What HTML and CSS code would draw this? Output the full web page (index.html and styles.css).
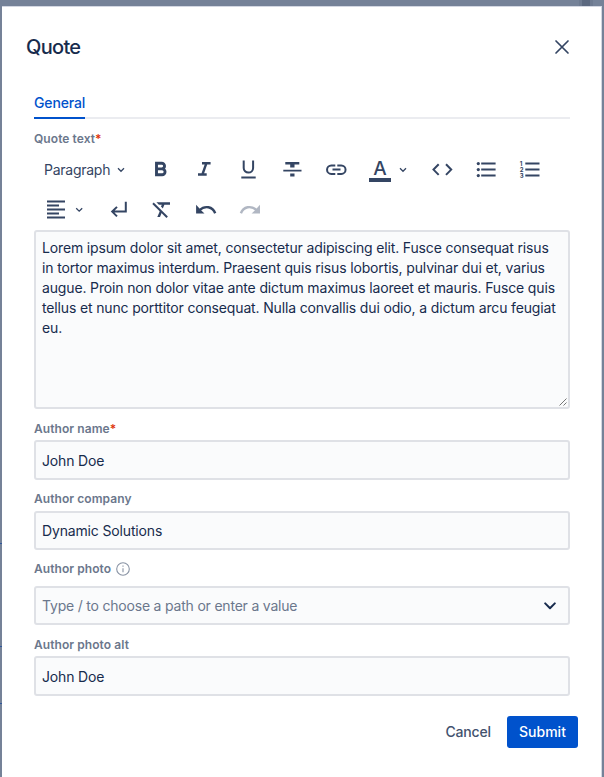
FILE: index.html
```html
<!DOCTYPE html>
<html lang="en">
<head>
<meta charset="utf-8">
<title>Quote</title>
<link rel="stylesheet" href="styles.css">
</head>
<body>
<main class="dialog">
  <header class="header">
    <h1>Quote</h1>
    <svg class="close" viewBox="0 0 16 16"><path d="M2 2l12 12M14 2L2 14"/></svg>
  </header>
  <nav class="tabs"><span class="tab">General</span></nav>
  <form class="form">
    <div class="label">Quote text<span class="req">*</span></div>
    <div class="toolbar">
      <div class="row">
        <div class="format"><span>Paragraph</span><svg class="chev" viewBox="0 0 8 6"><path d="M1 1.3l3 3 3-3"/></svg></div>
        <svg class="tool" viewBox="138 150 44 40"><path class="bold" d="M156.5 163.2h5.2a2.8 2.8 0 0 1 0 5.7h-5.2h5.6a2.9 2.9 0 0 1 0 5.9h-5.6z"/></svg>
        <svg class="tool" viewBox="182 150 44 40"><path class="s25" d="M202 163.2h8.6M198 174.5h8.7M206.4 163.2l-4 11.3"/></svg>
        <svg class="tool" viewBox="226 150 44 40"><path class="s2" d="M243.7 160.6v7.3a4.7 4.7 0 0 0 9.4 0v-7.3M241.3 177.6h14.4"/></svg>
        <svg class="tool" viewBox="270 150 44 40"><path class="solid" d="M285.3 162h14v2.6h-4.8v3h-4.3v-3h-4.9zM283.3 169.8h18.2v1.7h-18.2zM290.2 173.4h4.3v3h-4.3z"/></svg>
        <svg class="tool" viewBox="314 150 44 40"><path class="s2" d="M335.3 165.4h-4a4.2 4.2 0 0 0 0 8.5h4M337.3 165.4h4a4.2 4.2 0 0 1 0 8.5h-4M332.5 169.6h8"/></svg>
        <div class="color"><span class="letter">A</span><svg class="chev" viewBox="0 0 8 6"><path d="M1 1.3l3 3 3-3"/></svg></div>
        <svg class="tool" viewBox="420 150 44 40"><path class="s2" d="M438.7 164.3l-5.2 5.3 5.2 5.3M446 164.3l5.2 5.3-5.2 5.3"/></svg>
        <svg class="tool" viewBox="464 150 44 40"><path class="s2" d="M481.2 163.6h14.4M481.2 169.6h14.4M481.2 175.6h14.4"/><g class="solid"><circle cx="478.3" cy="163.6" r="1.6"/><circle cx="478.3" cy="169.6" r="1.6"/><circle cx="478.3" cy="175.6" r="1.6"/></g></svg>
        <svg class="tool" viewBox="508 150 44 40"><path class="s2" d="M525.3 163.6h14.2M525.3 169.6h14.2M525.3 175.6h14.2"/><g class="num"><text x="519.7" y="165.6">1</text><text x="519.7" y="171.7">2</text><text x="519.7" y="177.8">3</text></g></svg>
      </div>
      <div class="row">
        <svg class="wide" viewBox="34 190 62 40"><path class="s2" d="M47 201.5h18M47 205.6h12M47 209.6h18M47 213.6h12M47 217.6h18"/><path class="s13" d="M76.2 208.2l3 3 3-3"/></svg>
        <svg class="tool" viewBox="96 190 44 40"><path class="s2" d="M125.8 201.8v9.8h-13M117 206.9l-4.8 4.7 4.8 4.8"/></svg>
        <svg class="tool" viewBox="140 190 44 40"><path class="solid" d="M156.4 202.3H170v2.4h-5.6l-1.6 3.8-1.8-1.9.8-1.9h-2.9zM160.2 210.3l1.8 1.8-2 4.9h-2.7z"/><path class="s2" d="M153 203.2l14.2 14.1"/></svg>
        <svg class="tool" viewBox="184 190 44 40"><path class="solid" d="M196.1 204.8v8.7h8.4l-3.2-3.1z"/><path class="s25" d="M199.5 210.2c5.4-5.2 13.2-3.6 15.7 3"/></svg>
        <svg class="tool off" viewBox="228 190 44 40"><path class="solid" d="M260 204.8v8.7h-8.4l3.2-3.1z"/><path class="s25" d="M256.6 210.2c-5.4-5.2-13.2-3.6-15.7 3"/></svg>
      </div>
    </div>
    <div class="editor">Lorem ipsum dolor sit amet, consectetur adipiscing elit. Fusce consequat risus<br>in tortor maximus interdum. Praesent quis risus lobortis, pulvinar dui et, varius<br>augue. Proin non dolor vitae ante dictum maximus laoreet et mauris. Fusce quis<br>tellus et nunc porttitor consequat. Nulla convallis dui odio, a dictum arcu feugiat<br>eu.<svg class="grip" viewBox="0 0 8 8"><path d="M.5 7.5l7-7M4.5 7.5l3-3"/></svg></div>
    <div class="label">Author name<span class="req">*</span></div>
    <div class="input">John Doe</div>
    <div class="label">Author company</div>
    <div class="input">Dynamic Solutions</div>
    <div class="label photo">Author photo<svg class="info" viewBox="0 0 14 14"><circle cx="7" cy="7" r="6.3"/><path d="M7 6.2v4M7 3.6v1.2"/></svg></div>
    <div class="input select"><span>Type / to choose a path or enter a value</span><svg class="arrow" viewBox="0 0 12 8"><path d="M1.2 1.4L6 6.2l4.8-4.8"/></svg></div>
    <div class="label">Author photo alt</div>
    <div class="input">John Doe</div>
  </form>
  <footer class="footer"><span class="cancel">Cancel</span><span class="submit">Submit</span></footer>
</main>
</body>
</html>
```
FILE: styles.css
```css
* { box-sizing: border-box; }
html, body { height: 100%; }
body {
  margin: 0;
  padding: 6px 2px 0;
  overflow: hidden;
  background:
    linear-gradient(#5c6980, #5c6980) 582px 0 / 8px 6px no-repeat,
    linear-gradient(#6d7a90, #6d7a90) 579px 0 / 14px 6px no-repeat,
    linear-gradient(#2f569b, #2f569b) 0 543px / 2px 1px no-repeat,
    linear-gradient(#2f569b, #2f569b) 0 646px / 2px 1px no-repeat,
    linear-gradient(#2f569b, #2f569b) 0 703px / 2px 1px no-repeat,
    #758298;
  font: 14px/20px Inter, "Liberation Sans", sans-serif;
  letter-spacing: -0.15px;
  color: #172b4d;
}
.dialog { height: 771px; background: #fff; border: 1px solid #d3d7e2; border-width: 1px 1px 0 0; }
.header { display: flex; justify-content: space-between; align-items: center; height: 80px; padding: 0 31px 0 24px; }
h1 { margin: 0; font-size: 20px; line-height: 24px; font-weight: 500; letter-spacing: -0.7px; }
svg { display: block; flex: none; fill: none; stroke: #344563; }
.close { width: 16px; height: 16px; stroke-width: 1.7; stroke-linecap: round; }
.tabs { display: flex; height: 32px; margin: 0 31px 0 32px; border-bottom: 2px solid #ebecf0; }
.tab { height: 32px; padding-top: 6px; color: #0052cc; font-weight: 500; border-bottom: 2px solid #0052cc; }
.form { margin: 0 31px 0 32px; }
.label { display: flex; align-items: center; height: 31px; padding-top: 8px; font-size: 12px; line-height: 16px; font-weight: 600; letter-spacing: .07px; color: #6b778c; }
.req { color: #de350b; }
.row { display: flex; height: 40px; }
.toolbar { height: 80px; }
.format { display: flex; align-items: center; width: 104px; padding-left: 10px; gap: 7px; color: #344563; letter-spacing: -0.26px; }
.chev { width: 8px; height: 6px; stroke-width: 1.3; }
.tool { width: 44px; height: 40px; }
.wide { width: 62px; height: 40px; }
.bold { stroke-width: 2.9; }
.s25 { stroke-width: 2.4; }
.s2 { stroke-width: 2; }
.s13 { stroke-width: 1.3; }
.solid { fill: #344563; stroke: none; }
.num { fill: #344563; stroke: none; font-size: 6px; font-weight: 700; }
.off { opacity: .38; }
.color { display: flex; align-items: center; width: 62px; padding-left: 11px; gap: 8px; }
.letter { width: 22px; height: 24px; border-bottom: 4px solid #344563; color: #344563; font-size: 19px; line-height: 21px; font-weight: 500; text-align: center; }
.editor, .input { background: #fafbfc; border: 2px solid #dfe1e6; border-radius: 3px; }
.editor { position: relative; height: 179px; padding: 6px 0 0 6px; white-space: nowrap; }
.grip { position: absolute; right: 1px; bottom: 1px; width: 8px; height: 8px; stroke: #777; stroke-width: 1; }
.input { display: flex; align-items: center; height: 39.5px; padding: 1.5px 6px 0; }
.label.photo { height: 35.5px; padding-top: 2.5px; gap: 5px; }
.info { width: 14px; height: 14px; stroke: #8993a4; stroke-width: 1.1; }
.input.select { justify-content: space-between; color: #6b778c; padding-right: 12px; letter-spacing: -0.2px; }
.arrow { width: 12px; height: 8px; stroke: #172b4d; stroke-width: 2; stroke-linecap: round; stroke-linejoin: round; }
.footer { display: flex; justify-content: flex-end; align-items: center; margin: 20px 23px 0 0; gap: 16px; font-weight: 500; }
.cancel { color: #42526e; }
.submit { height: 32px; width: 71px; line-height: 32px; text-align: center; border-radius: 3px; background: #0052cc; color: #fff; letter-spacing: 0; }
```
